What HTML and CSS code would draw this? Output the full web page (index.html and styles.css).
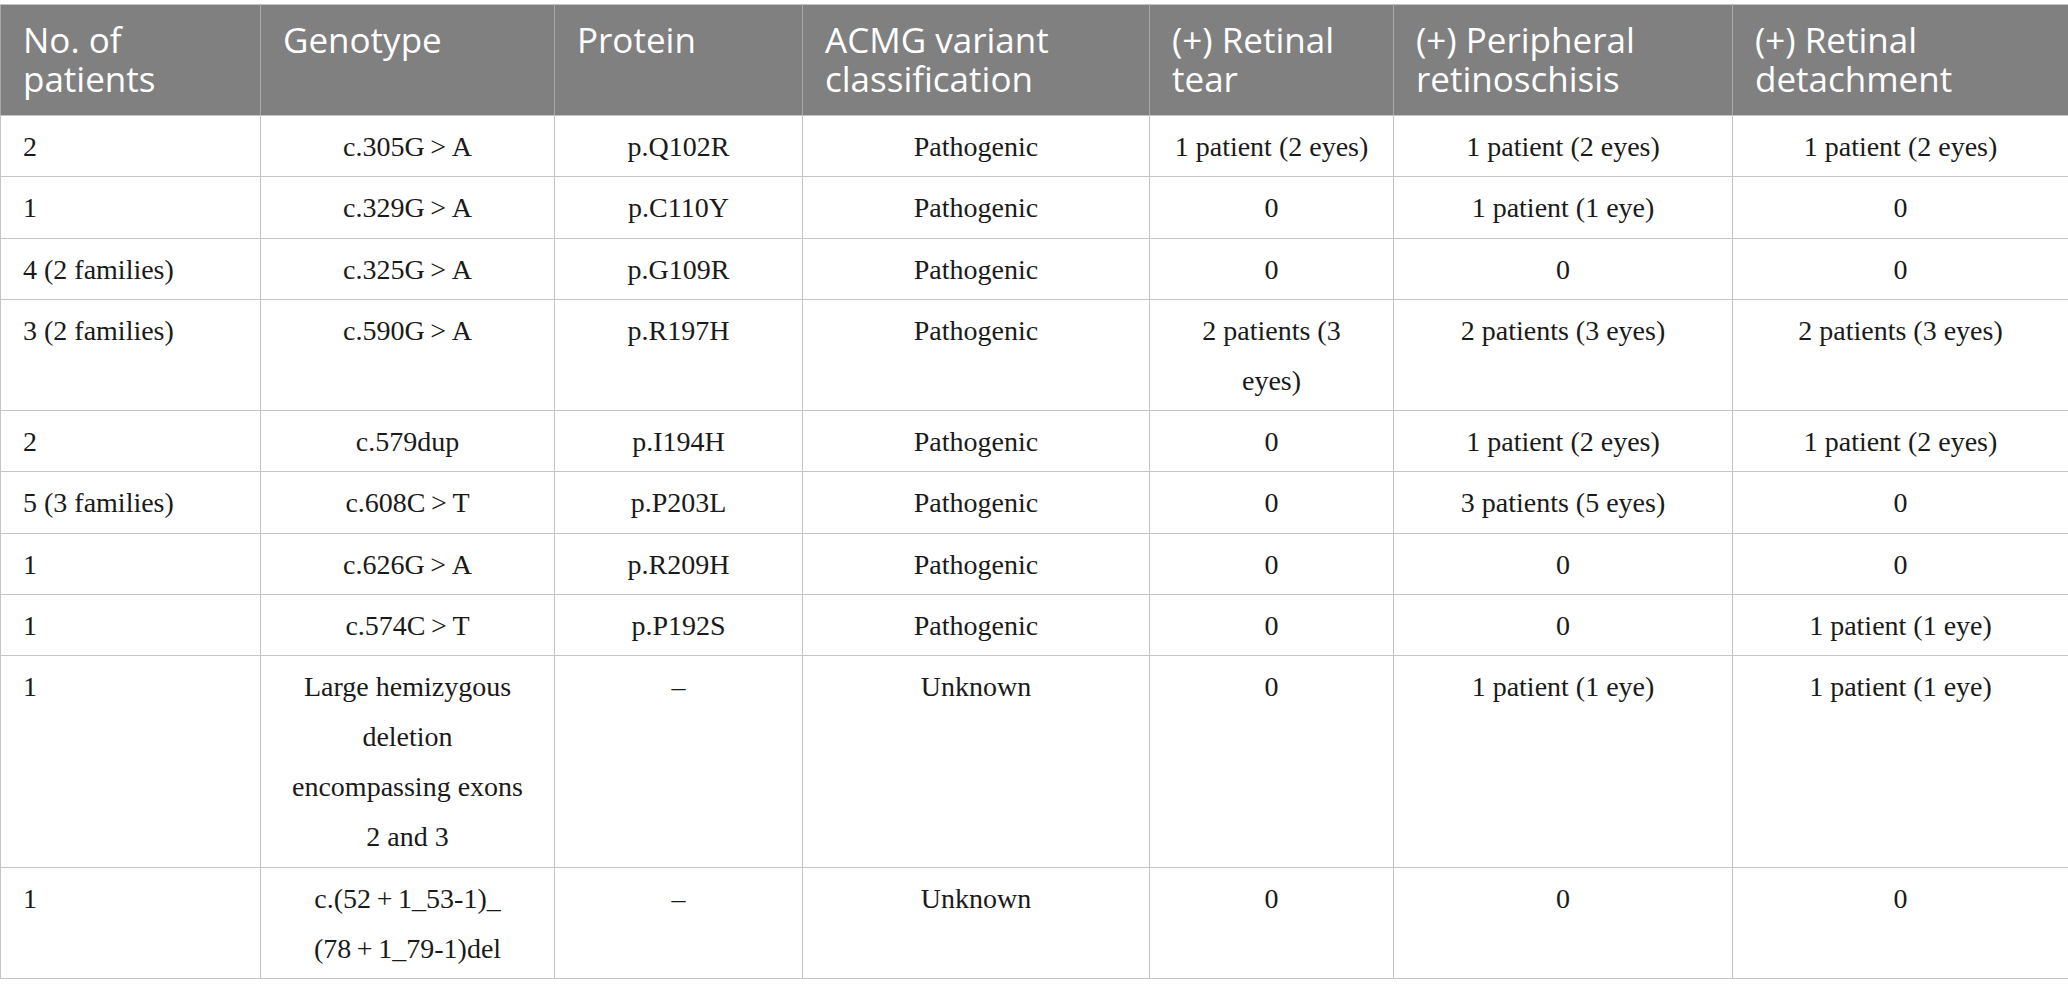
FILE: index.html
```html
<!DOCTYPE html>
<html>
<head>
<meta charset="utf-8">
<link rel="stylesheet" href="styles.css">
</head>
<body>
<table class="data">
  <colgroup>
    <col class="c1"><col class="c2"><col class="c3"><col class="c4"><col class="c5"><col class="c6"><col class="c7">
  </colgroup>
  <thead>
    <tr>
      <th>No. of patients</th>
      <th>Genotype</th>
      <th>Protein</th>
      <th>ACMG variant classification</th>
      <th>(+) Retinal tear</th>
      <th>(+) Peripheral retinoschisis</th>
      <th>(+) Retinal detachment</th>
    </tr>
  </thead>
  <tbody>
    <tr><td>2</td><td>c.305G&#8201;&gt;&#8201;A</td><td>p.Q102R</td><td>Pathogenic</td><td>1 patient (2 eyes)</td><td>1 patient (2 eyes)</td><td>1 patient (2 eyes)</td></tr>
    <tr><td>1</td><td>c.329G&#8201;&gt;&#8201;A</td><td>p.C110Y</td><td>Pathogenic</td><td>0</td><td>1 patient (1 eye)</td><td>0</td></tr>
    <tr><td>4 (2 families)</td><td>c.325G&#8201;&gt;&#8201;A</td><td>p.G109R</td><td>Pathogenic</td><td>0</td><td>0</td><td>0</td></tr>
    <tr><td>3 (2 families)</td><td>c.590G&#8201;&gt;&#8201;A</td><td>p.R197H</td><td>Pathogenic</td><td>2 patients (3 eyes)</td><td>2 patients (3 eyes)</td><td>2 patients (3 eyes)</td></tr>
    <tr><td>2</td><td>c.579dup</td><td>p.I194H</td><td>Pathogenic</td><td>0</td><td>1 patient (2 eyes)</td><td>1 patient (2 eyes)</td></tr>
    <tr><td>5 (3 families)</td><td>c.608C&#8201;&gt;&#8201;T</td><td>p.P203L</td><td>Pathogenic</td><td>0</td><td>3 patients (5 eyes)</td><td>0</td></tr>
    <tr><td>1</td><td>c.626G&#8201;&gt;&#8201;A</td><td>p.R209H</td><td>Pathogenic</td><td>0</td><td>0</td><td>0</td></tr>
    <tr><td>1</td><td>c.574C&#8201;&gt;&#8201;T</td><td>p.P192S</td><td>Pathogenic</td><td>0</td><td>0</td><td>1 patient (1 eye)</td></tr>
    <tr><td>1</td><td>Large hemizygous deletion encompassing exons 2 and 3</td><td>–</td><td>Unknown</td><td>0</td><td>1 patient (1 eye)</td><td>1 patient (1 eye)</td></tr>
    <tr><td>1</td><td>c.(52&#8201;+&#8201;1_53-1)_<br>(78&#8201;+&#8201;1_79-1)del</td><td>–</td><td>Unknown</td><td>0</td><td>0</td><td>0</td></tr>
  </tbody>
</table>
</body>
</html>
```
FILE: styles.css
```css
html, body {
  margin: 0;
  padding: 0;
  background: #ffffff;
}

body {
  padding-top: 4px;
}

.data {
  width: 2068px;
  table-layout: fixed;
  border-collapse: collapse;
  border: 1px solid #c4c4c4;
}

.c1 { width: 260px; }
.c2 { width: 294px; }
.c3 { width: 248px; }
.c4 { width: 347px; }
.c5 { width: 244px; }
.c6 { width: 339px; }
.c7 { width: 336px; }

.data th {
  background: #808080;
  color: #ffffff;
  font-family: "Open Sans", "Noto Sans", sans-serif;
  font-weight: 400;
  font-size: 35px;
  line-height: 39px;
  text-align: left;
  vertical-align: top;
  padding: 15px 22px 17px 22px;
  border: 1px solid #a9a9a9;
  border-bottom-color: #c4c4c4;
  border-top-color: #c4c4c4;
}

.data td {
  font-family: "Liberation Serif", "DejaVu Serif", serif;
  font-size: 28px;
  line-height: 50px;
  color: #1a1a1a;
  text-align: center;
  vertical-align: top;
  padding: 6px 22px 4.3px 22px;
  border: 1px solid #c4c4c4;
}

.data td:first-child {
  text-align: left;
}
```
